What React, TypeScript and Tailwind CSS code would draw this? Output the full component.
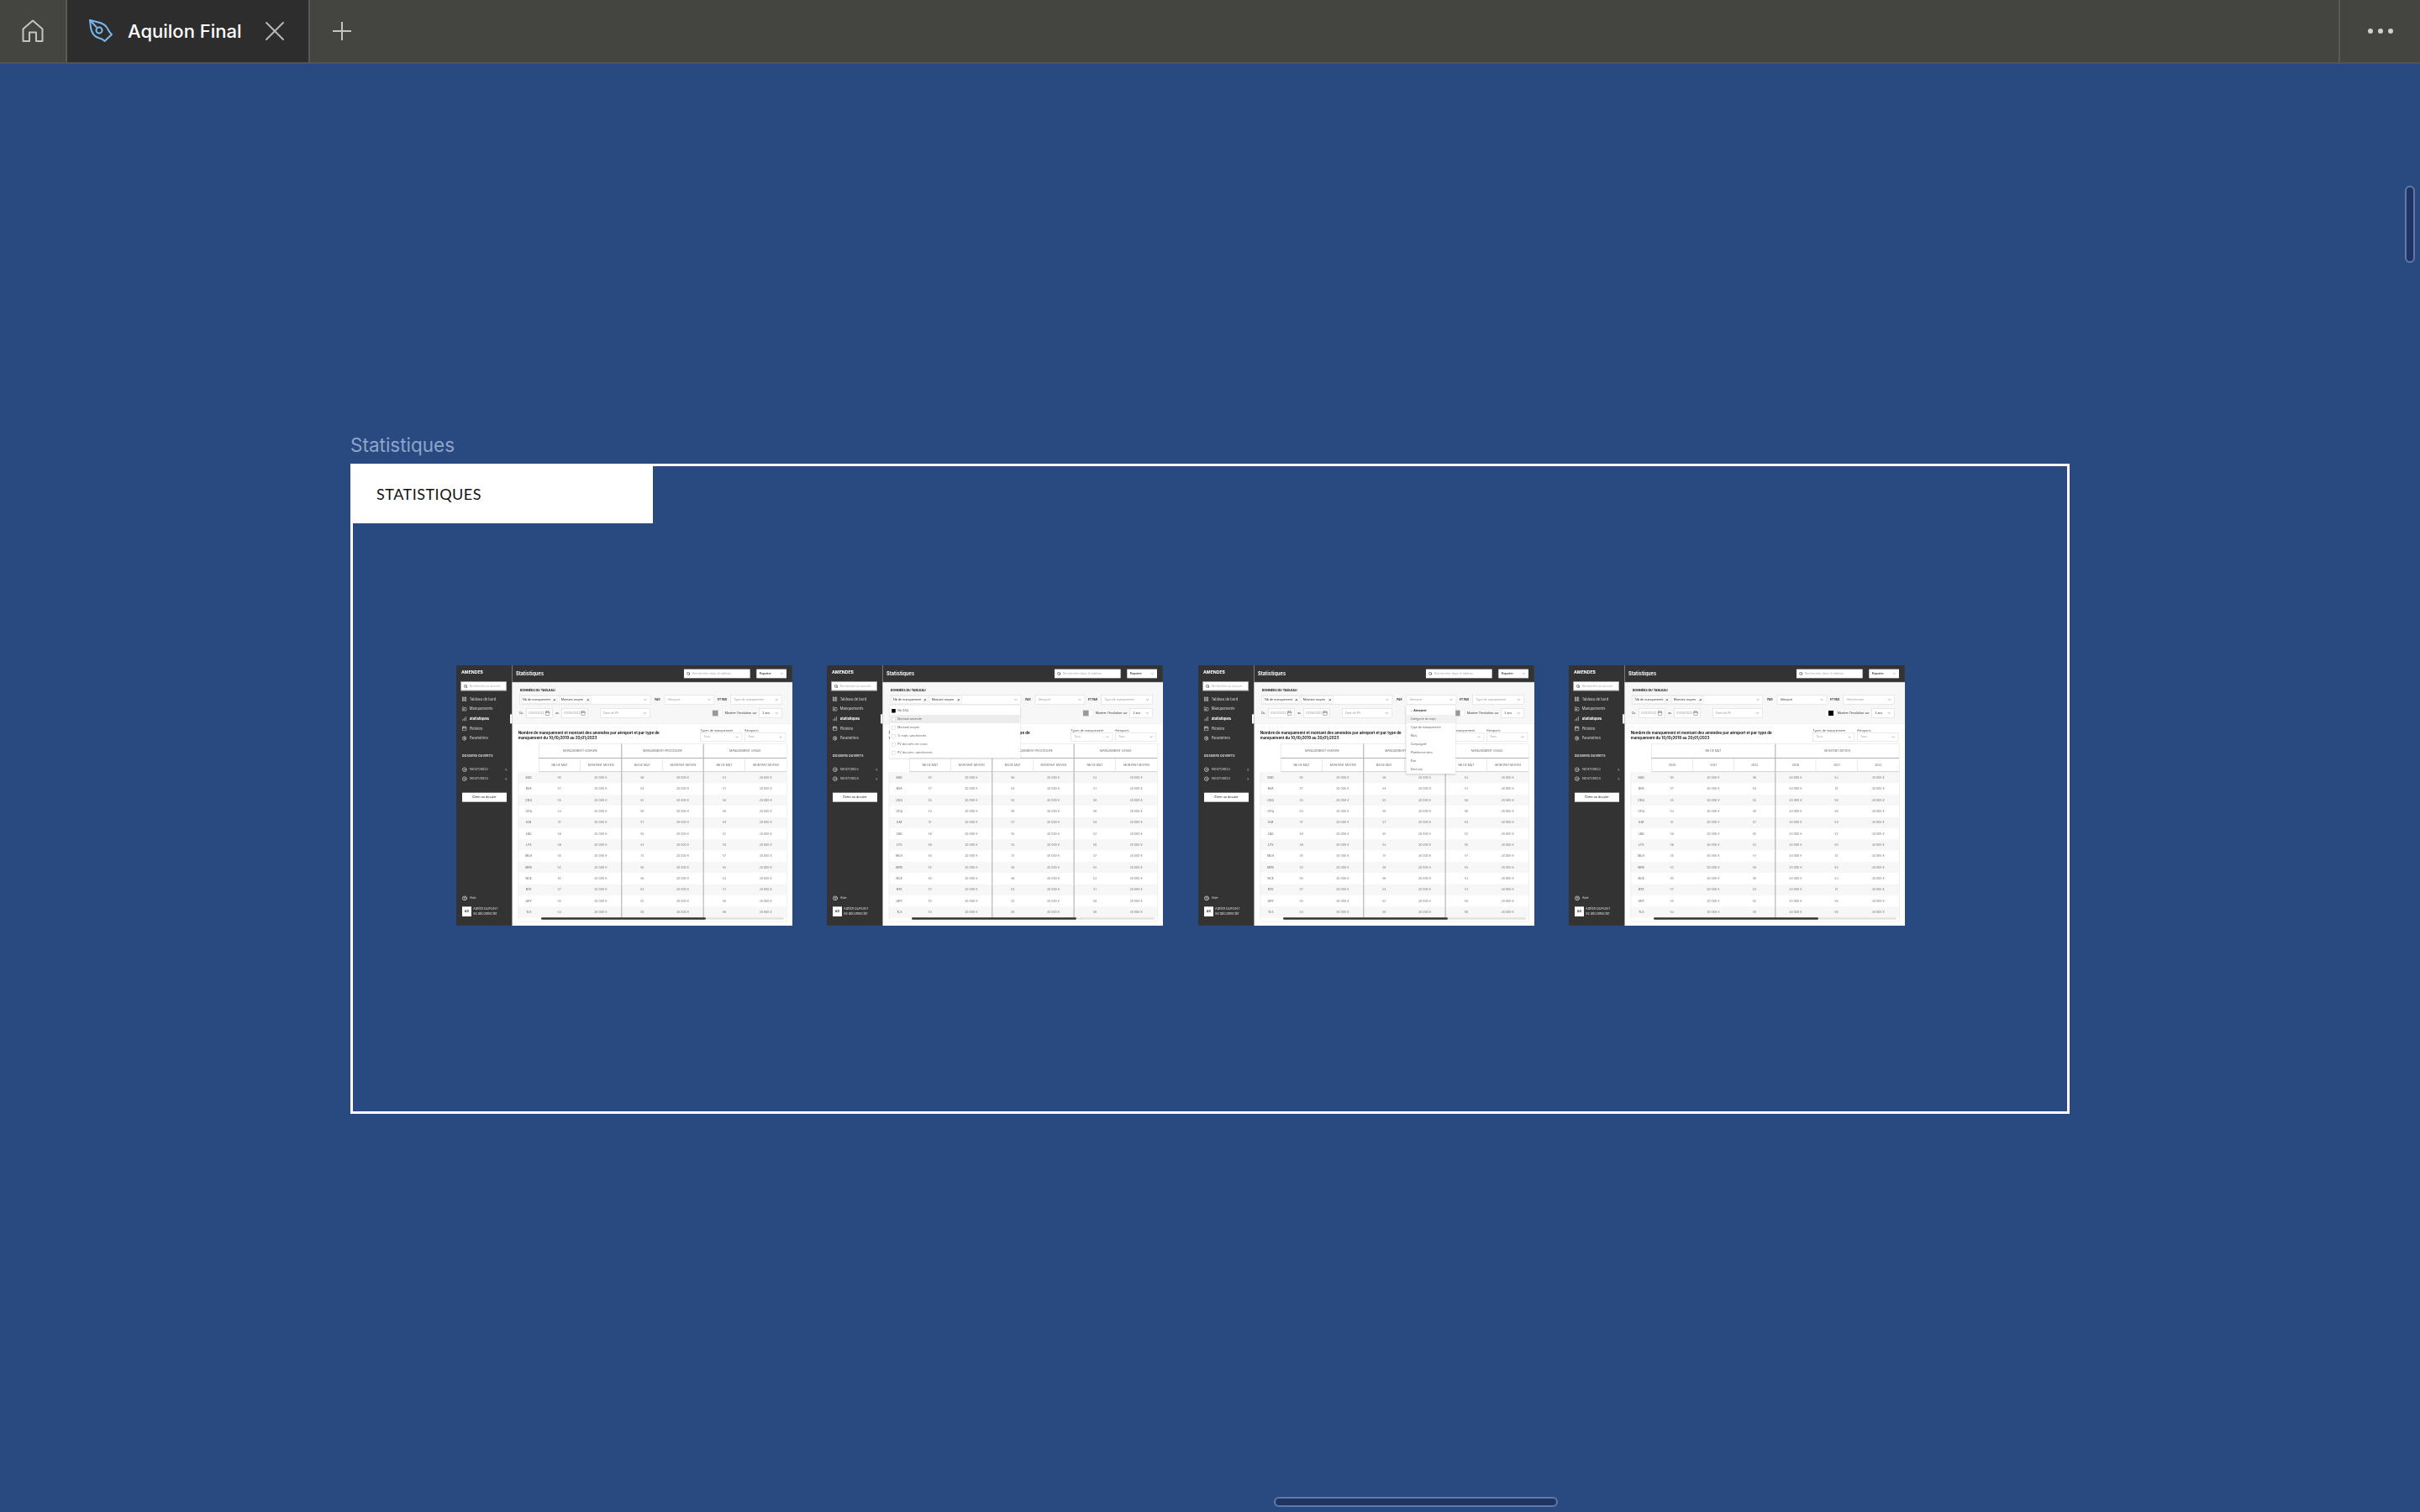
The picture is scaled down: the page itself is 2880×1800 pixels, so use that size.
import React from "react";
import { Search, ChevronDown, X, Calendar, LayoutGrid, FolderInput, ChartNoAxesColumnIncreasing, Settings, CircleHelp, CircleDot, Check } from "lucide-react";

const rows = ["BOD", "BVA", "CDG", "CFQ", "ILM", "LBG", "LYS", "MLH", "MRS", "NCE", "NTE", "ORY", "TLS"];
const nav = [
  { label: "Tableau de bord", Icon: LayoutGrid },
  { label: "Manquements", Icon: FolderInput },
  { label: "Statistiques", Icon: ChartNoAxesColumnIncreasing, active: true },
  { label: "Plénière", Icon: Calendar },
  { label: "Paramètres", Icon: Settings },
];

function Field({ text, w, dark }: { text: string; w: string; dark?: boolean }) {
  return (
    <div className={`${w} h-[34px] shrink-0 flex items-center justify-between px-[10px] bg-white border-2 border-[#dedede] text-[10.5px] ${dark ? "text-[#333]" : "text-[#999]"}`}>
      <span className="truncate">{text}</span>
      <ChevronDown className="w-[14px] h-[14px] text-[#555] shrink-0" strokeWidth={2.5} />
    </div>
  );
}

function DateField({ text, w }: { text: string; w: string }) {
  return (
    <div className={`${w} h-[34px] shrink-0 flex items-center justify-between px-[7px] bg-white border-2 border-[#dedede] text-[10.5px] text-[#999]`}>
      <span>{text}</span>
      <Calendar className="w-[18px] h-[18px] text-[#666]" strokeWidth={2} />
    </div>
  );
}

function Chip({ text, w }: { text: string; w: string }) {
  return (
    <div className={`${w} h-[28px] shrink-0 flex items-center justify-between px-[5px] border border-[#cfcfcf] text-[10.8px] text-[#333] whitespace-nowrap`}>
      <span>{text}</span>
      <X className="w-[13px] h-[13px] text-[#222]" strokeWidth={3} />
    </div>
  );
}

function Sidebar() {
  return (
    <div className="w-[200px] h-[930px] shrink-0 flex flex-col bg-[#333333] text-[#dcdcdc] border-r border-[#555]">
      <div className="h-[52px] flex items-center pl-[18px] text-[15.5px] font-bold text-white">AMENDES</div>
      <div className="ml-[16px] mt-[6px] w-[164px] h-[33px] flex items-center gap-[7px] pl-[8px] bg-white border-2 border-[#8a8a8a] text-[10.3px] text-[#aaa]">
        <Search className="w-[14px] h-[14px] text-[#333]" strokeWidth={3} />
        <span>Rechercher un dossier</span>
      </div>
      <div className="mt-[13px] flex flex-col gap-[1px]">
        {nav.map(({ label, Icon, active }) => (
          <div key={label} className="h-[34px] flex items-center pl-[20px] gap-[9px]">
            <Icon className="w-[18px] h-[18px] text-[#e6e6e6]" strokeWidth={2.4} />
            <span className={`text-[12.4px] ${active ? "text-[12px] font-bold text-white" : ""}`}>{label}</span>
            {active && <div className="ml-auto w-[7px] h-[33px] bg-white" />}
          </div>
        ))}
      </div>
      <div className="mt-[37px] h-[20px] pl-[21px] flex items-center text-[10.5px] font-semibold tracking-wide text-[#e6e6e6]">DOSSIERS OUVERTS</div>
      <div className="mt-[21px] flex flex-col">
        {["180471/0023", "180471/0024"].map((f) => (
          <div key={f} className="h-[33px] flex items-center pl-[21px] pr-[16px] gap-[9px]">
            <CircleDot className="w-[17px] h-[17px] text-[#e6e6e6]" strokeWidth={3} />
            <span className="text-[10.8px]">{f}</span>
            <X className="ml-auto w-[10px] h-[10px] text-[#ddd]" strokeWidth={3} />
          </div>
        ))}
      </div>
      <div className="ml-[21px] mt-[33px] w-[159px] h-[33px] flex items-center justify-center bg-white text-[10.8px] font-medium text-[#333]">Créer un dossier</div>
      <div className="mt-auto h-[30px] pl-[21px] flex items-center gap-[9px] text-[10.8px]">
        <CircleHelp className="w-[18px] h-[18px] text-[#e6e6e6]" strokeWidth={3} />
        <span>Aide</span>
      </div>
      <div className="mt-[14px] mb-[33px] pl-[21px] flex items-center gap-[6px]">
        <div className="w-[33px] h-[35px] bg-white flex items-center justify-center text-[11px] font-semibold text-[#333]">AD</div>
        <div className="flex flex-col text-[11.5px] leading-[18px]">
          <span>Adrien DUPONT</span>
          <span>Se déconnecter</span>
        </div>
      </div>
    </div>
  );
}

const cols = "grid-cols-[73px_148px_147px_147px_145px_149px_149px]";

function Table({ yearly }: { yearly?: boolean }) {
  const groups = yearly
    ? [["NB DE MQT", "col-span-3"], ["MONTANT MOYEN", "col-span-3"]]
    : [["MANQUEMENT HORAIRE", "col-span-2"], ["MANQUEMENT PROCÉDURE", "col-span-2"], ["MANQUEMENT USAGE", "col-span-2"]];
  const subs = yearly
    ? ["2020", "2021", "2022", "2020", "2021", "2022"]
    : ["NB DE MQT", "MONTANT MOYEN", "NB DE MQT", "MONTANT MOYEN", "NB DE MQT", "MONTANT MOYEN"];
  const sep = (i: number) => (yearly ? i === 3 : i === 2 || i === 4);
  return (
    <div className="w-[960px] h-[636px] mt-[8px] ml-[21px] flex flex-col border-r-2 border-b-2 border-[#e8e8e8]">
      <div className={`grid ${cols} text-[10.2px] text-[#666]`}>
        <div className="h-[52px]" />
        {groups.map(([g, span], i) => (
          <div key={g} className={`${span} h-[52px] flex items-center justify-center border-t-2 border-t-[#e8e8e8] border-b-2 border-b-[#8c8c8c] ${i === 0 ? "border-l-2 border-l-[#e0e0e0]" : "border-l-[3px] border-l-[#a8a8a8]"}`}>{g}</div>
        ))}
        <div className="h-[50px]" />
        {subs.map((s, i) => (
          <div key={i} className={`h-[50px] flex items-center justify-center border-b-[3px] border-b-[#c4c4c4] ${sep(i) ? "border-l-[3px] border-l-[#a8a8a8]" : "border-l-2 border-l-[#e0e0e0]"}`}>{s}</div>
        ))}
      </div>
      <div className="flex flex-col">
        {rows.map((r, ri) => (
          <div key={r} className={`grid ${cols} h-[40px] text-[10.5px] text-[#777] ${ri % 2 === 0 ? "bg-[#f7f7f7]" : "bg-white"}`}>
            <div className="flex items-center justify-center border-l-2 border-[#e8e8e8] text-[#555]">{r}</div>
            {subs.map((_, i) => (
              <div key={i} className={`flex items-center justify-center ${sep(i) ? "border-l-[3px] border-l-[#a8a8a8]" : ""}`}>
                {i % 2 === 0 ? 50 + ((ri * 7 + i * 3) % 9) : "30 000 €"}
              </div>
            ))}
          </div>
        ))}
      </div>
      <div className="-mt-[2px] h-[9px] flex items-center border-l-2 border-[#e8e8e8] pl-[80px] pr-[9px]">
        <div className="flex-1 h-[7px] bg-[#e2e2e2] rounded-full">
          <div className="w-[588px] h-[7px] bg-[#333] rounded-full" />
        </div>
      </div>
    </div>
  );
}

function Menu({ kind }: { kind: "data" | "par" }) {
  if (kind === "data") {
    const items = ["Nb SAQ", "Montant amende", "Montant moyen", "% mqts sanctionnés", "PV dossiers en cours", "PV dossiers sanctionnés"];
    return (
      <div className="absolute left-[24px] top-[83px] z-10 w-[467px] h-[188px] pt-[3px] px-[2px] flex flex-col bg-white shadow-[0_2px_6px_rgba(0,0,0,0.25)]">
        {items.map((t, i) => (
          <div key={t} className={`h-[30px] flex items-center pl-[6px] gap-[7px] text-[10.8px] text-[#666] ${i === 1 ? "bg-[#ececec] text-[#333]" : ""}`}>
            <div className={`w-[13px] h-[13px] border ${i === 0 ? "bg-black border-black" : "bg-white border-[#bbb]"}`} />
            <span>{t}</span>
          </div>
        ))}
      </div>
    );
  }
  const items = ["Aéroport", "Catégorie de mqts", "Type de manquement", "Mois", "Compagnie", "Plateforme aéro", "État", "Décision"];
  return (
    <div className="absolute left-[542px] top-[83px] z-10 w-[177px] h-[244px] pt-[3px] flex flex-col bg-white shadow-[0_2px_6px_rgba(0,0,0,0.25)]">
      {items.map((t, i) => (
        <div key={t} className={`h-[30px] flex items-center shrink-0 pl-[16px] text-[10.5px] ${i === 0 ? "font-bold text-[#333] pl-[8px] gap-[2px]" : "text-[#666]"} ${i === 1 ? "bg-[#f1f1f1]" : ""}`}>
          {i === 0 && <Check className="w-[9px] h-[9px]" strokeWidth={3} />}
          <span>{t}</span>
        </div>
      ))}
    </div>
  );
}

function Main({ variant }: { variant: "a" | "b" | "c" | "d" }) {
  const yearly = variant === "d";
  return (
    <div className="flex-1 h-[930px] flex flex-col bg-white">
      <div className="h-[61px] shrink-0 flex items-center pl-[13px] pr-[21px] bg-[#333333] border-b-2 border-[#666]">
        <span className="text-[17px] font-bold text-[#f2f2f2]">Statistiques</span>
        <div className="ml-auto w-[236px] h-[32px] flex items-center gap-[7px] pl-[9px] bg-white text-[10.8px] text-[#aaa]">
          <Search className="w-[14px] h-[14px] text-[#444]" strokeWidth={3} />
          <span>Rechercher dans le tableau</span>
        </div>
        <div className="ml-[23px] w-[107px] h-[32px] flex items-center justify-between px-[11px] bg-white text-[10px] font-semibold text-[#333]">
          <span>Exporter</span>
          <ChevronDown className="w-[12px] h-[12px]" strokeWidth={2.5} />
        </div>
      </div>
      <div className="relative flex-1 flex flex-col">
        <div className="h-[148px] shrink-0 bg-[#f7f7f7] border-b border-[#e4e4e4] pl-[25px]">
          <div className="h-[45px] pt-[19px] pl-[2px] text-[11px] leading-[16px] font-bold text-[#222]">DONNÉES DU TABLEAU</div>
          <div className="flex items-center h-[34px]">
            <div className="w-[469px] h-[34px] shrink-0 flex items-center gap-[5px] pl-[4px] pr-[10px] bg-white border-2 border-[#dedede]">
              <Chip text="Nb de manquement" w="w-[132px]" />
              <Chip text="Montant moyen" w="w-[115px]" />
              <ChevronDown className="ml-auto w-[14px] h-[14px] text-[#555]" strokeWidth={2.5} />
            </div>
            <span className="ml-[15px] w-[34px] text-[9.5px] font-bold text-[#333]">PAR</span>
            <Field text="Aéroport" w="w-[179px]" dark={yearly} />
            <span className="ml-[11px] w-[46px] text-[9.5px] font-bold text-[#333]">ET PAR</span>
            <Field text={yearly ? "Sélectionner" : "Type de manquement"} w="w-[185px]" />
          </div>
          <div className="flex items-center h-[34px] mt-[14px]">
            <span className="w-[25px] pl-[1px] text-[9.5px] text-[#333]">Du</span>
            <DateField text="01/01/2022" w="w-[94px]" />
            <span className="ml-[11px] w-[21px] text-[9.5px] text-[#333]">au</span>
            <DateField text="01/06/2022" w="w-[95px]" />
            <div className="ml-[42px]"><Field text="Date de PV" w="w-[179px]" /></div>
            <div className={`ml-[222px] w-[36px] h-[22px] flex bg-white border border-[#ddd] ${yearly ? "justify-end pr-[4px] items-center" : ""}`}>
              <div className={yearly ? "w-[18px] h-[18px] bg-black" : "w-[20px] h-full bg-[#999]"} />
            </div>
            <span className="ml-[9px] w-[122px] text-[10.7px] text-[#333] whitespace-nowrap">Montrer l'évolution sur</span>
            <Field text="3 ans" w="w-[82px]" dark />
          </div>
        </div>
        <div className="flex items-start justify-between pl-[21px] pr-[23px] mt-[16px] h-[47px]">
          <div className="w-[530px] pt-[6px] text-[13.4px] leading-[18px] font-bold text-[#1c1c1c]">
            Nombre de manquement et montant des amendes par aéroport et par type de manquement du 10/10/2019 au 20/01/2023
          </div>
          <div className="flex gap-[8px]">
            {[["Types de manquement", "w-[150px]"], ["Aéroports", "w-[148px]"]].map(([l, w]) => (
              <div key={l} className="flex flex-col">
                <span className="h-[15px] text-[10.8px] leading-[15px] text-[#555]">{l}</span>
                <div className={`${w} h-[32px] flex items-center justify-between px-[10px] bg-white border-2 border-[#dedede] text-[10.5px] text-[#999]`}>
                  <span>Tous</span>
                  <ChevronDown className="w-[13px] h-[13px] text-[#555]" strokeWidth={2.5} />
                </div>
              </div>
            ))}
          </div>
        </div>
        <Table yearly={yearly} />
        {variant === "b" && <Menu kind="data" />}
        {variant === "c" && <Menu kind="par" />}
      </div>
    </div>
  );
}

function Thumb({ variant }: { variant: "a" | "b" | "c" | "d" }) {
  return (
    <div className="w-[400px] h-[310px] shrink-0 overflow-hidden">
      <div className="w-[1200px] h-[930px] flex origin-top-left scale-[0.3333] blur-[1.2px] font-['Inter',sans-serif] bg-white">
        <Sidebar />
        <Main variant={variant} />
      </div>
    </div>
  );
}

export default function App() {
  return (
    <div className="relative w-[2880px] h-[1800px] overflow-hidden flex flex-col bg-[#294a80] font-['Inter',sans-serif]">
      <div className="h-[76px] shrink-0 flex bg-[#444440] border-b-2 border-[#54544f]">
        <div className="w-[80px] flex items-center justify-center border-r-2 border-[#5a5a55]">
          <svg width="26" height="28" viewBox="0 0 26 28" fill="none" stroke="#c4c4c0" strokeWidth="2">
            <path d="M1.5 26V11.5L13 1.5l11.5 10V26h-7.5V15.5H9V26Z" strokeLinejoin="round" />
          </svg>
        </div>
        <div className="w-[289px] flex items-center bg-[#2d2d2d] border-r-2 border-[#5a5a55] pl-[25px]">
          <svg width="30" height="30" viewBox="0 0 30 30" fill="none" stroke="#7ab8ec" strokeWidth="2" strokeLinejoin="round">
            <path d="M2 2l9 2.2c6 1.2 10.500 4 12.500 8.800 1 2 2.500 4.500 4.500 6l-8.500 8c-1.500-2-3.500-3-6-3.500C7.500 22 4 17 3 11Z" />
            <path d="M2.500 2.500l7.500 8" />
            <circle cx="13" cy="14" r="3.500" />
          </svg>
          <span className="ml-[17px] text-[22px] font-medium text-white whitespace-nowrap">Aquilon Final</span>
          <X className="ml-[19px] w-[40px] h-[40px] text-[#b8b8b4]" strokeWidth={1.2} />
        </div>
        <div className="ml-[27px] flex items-center">
          <svg width="22" height="22" viewBox="0 0 22 22" stroke="#c4c4c0" strokeWidth="2"><path d="M0 11h22M11 0v22" /></svg>
        </div>
        <div className="ml-auto w-[97px] flex items-center justify-center gap-[6px] border-l-2 border-[#5a5a55]">
          <div className="w-[6px] h-[6px] rounded-full bg-[#cfcfcb]" />
          <div className="w-[6px] h-[6px] rounded-full bg-[#cfcfcb]" />
          <div className="w-[6px] h-[6px] rounded-full bg-[#cfcfcb]" />
        </div>
      </div>

      <div className="pl-[417px] pt-[439px]">
        <div className="h-[37px] text-[22.5px] leading-[30px] text-[#8ea4cb]">Statistiques</div>
        <div className="w-[2046px] h-[774px] border-[3px] border-white flex flex-col">
          <div className="w-[357px] h-[69px] shrink-0 -mt-[1px] flex items-center pl-[28px] bg-white font-['Lato',sans-serif] text-[18px] font-normal text-[#111] tracking-[0.5px]">STATISTIQUES</div>
          <div className="ml-[123px] mt-[169px] flex gap-[41.33px]">
            <Thumb variant="a" />
            <Thumb variant="b" />
            <Thumb variant="c" />
            <Thumb variant="d" />
          </div>
        </div>
      </div>

      <div className="absolute left-[2862px] top-[221px] w-[12px] h-[92px] rounded-full bg-[#1f3460] border-2 border-[#6079ab]" />
      <div className="absolute left-[1516px] top-[1782px] w-[338px] h-[12px] rounded-full bg-[#1f3460] border-2 border-[#6079ab]" />
    </div>
  );
}
